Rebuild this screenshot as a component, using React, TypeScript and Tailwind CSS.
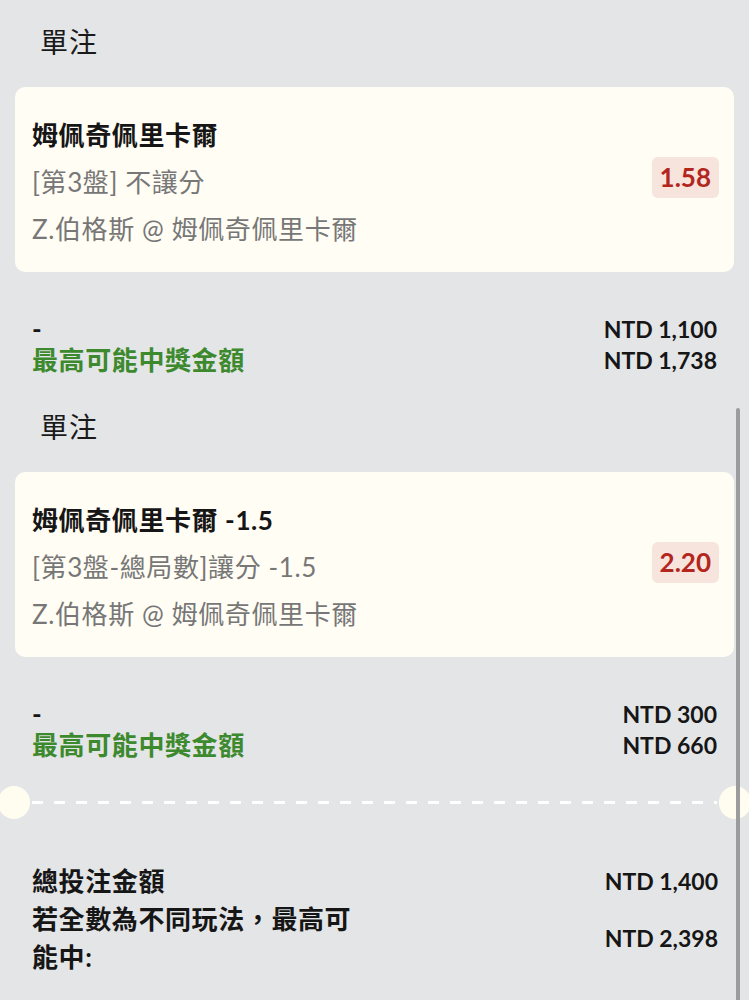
import React from 'react';

interface BetCardProps {
  title: string;
  market: string;
  match: string;
  odds: string;
}

const BetCard: React.FC<BetCardProps> = ({ title, market, match, odds }) => (
  <div className="mt-[25px] flex items-center rounded-[10px] bg-[#fffdf4] pl-[17px] pr-[15px] pt-[25px] pb-[19px]">
    <div className="flex-1 text-[26px] leading-[47px] tracking-[0.6px]">
      <div className="font-bold text-[#161616]">{title}</div>
      <div className="text-[#777777]">{market}</div>
      <div className="text-[#777777]">{match}</div>
    </div>
    <div className="mt-[-10px] flex h-[41px] items-center rounded-[6px] bg-[#f7e4dd] px-[8px] text-[26px] font-bold text-[#b3261e]">
      {odds}
    </div>
  </div>
);

interface SummaryProps {
  stake: string;
  win: string;
}

const Summary: React.FC<SummaryProps> = ({ stake, win }) => (
  <div className="mt-[42px] flex justify-between px-[17px] leading-[31px]">
    <div className="text-[26px] font-bold tracking-[0.6px]">
      <div className="text-[#161616]">-</div>
      <div className="text-[#3d8a2e]">最高可能中獎金額</div>
    </div>
    <div className="text-right text-[23px] font-bold text-[#161616]">
      <div>{stake}</div>
      <div>{win}</div>
    </div>
  </div>
);

const SectionHeader: React.FC<{ className?: string }> = ({ className }) => (
  <div className={`pl-[25px] text-[28px] leading-[40px] tracking-[1px] text-[#1a1a1a] ${className ?? ''}`}>單注</div>
);

export default function App() {
  return (
    <div className="relative min-h-[1000px] overflow-hidden bg-[#e4e5e7] font-['Lato','Noto_Sans_CJK_TC',sans-serif]">
      <div className="px-[15px] pt-[22px]">
        <SectionHeader />
        <BetCard title="姆佩奇佩里卡爾" market="[第3盤] 不讓分" match="Z.伯格斯 @ 姆佩奇佩里卡爾" odds="1.58" />
        <Summary stake="NTD 1,100" win="NTD 1,738" />

        <SectionHeader className="mt-[31px]" />
        <BetCard
          title="姆佩奇佩里卡爾 -1.5"
          market="[第3盤-總局數]讓分 -1.5"
          match="Z.伯格斯 @ 姆佩奇佩里卡爾"
          odds="2.20"
        />
        <Summary stake="NTD 300" win="NTD 660" />
      </div>

      {/* ticket tear line */}
      <div className="mt-[25px] flex items-center">
        <div className="ml-[-2px] h-[33px] w-[32px] shrink-0 rounded-full bg-[#fffdf0]" />
        <div className="mx-[2px] h-[3px] flex-1 bg-[repeating-linear-gradient(to_right,#ffffff_0_11px,transparent_11px_22px)]" />
        <div className="mr-[-2px] h-[33px] w-[32px] shrink-0 rounded-full bg-[#fffdf0]" />
      </div>

      <div className="mt-[43px] pl-[32px] pr-[31px] font-bold leading-[38px] text-[#161616]">
        <div className="flex items-center justify-between">
          <div className="text-[26px] tracking-[0.6px]">總投注金額</div>
          <div className="text-[23px]">NTD 1,400</div>
        </div>
        <div className="flex items-center justify-between">
          <div className="w-[335px] text-[26px] tracking-[0.6px]">若全數為不同玩法，最高可能中:</div>
          <div className="text-[23px]">NTD 2,398</div>
        </div>
      </div>

      <div className="absolute right-[9px] top-[408px] h-[620px] w-[4px] rounded-full bg-[#9c9c9c]" />
    </div>
  );
}
